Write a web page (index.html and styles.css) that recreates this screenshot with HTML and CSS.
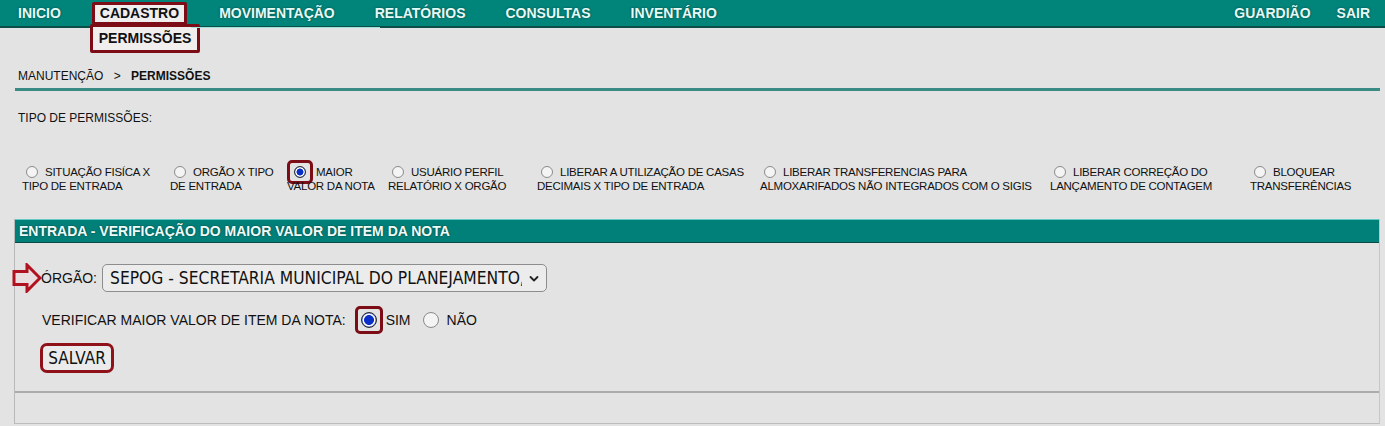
FILE: index.html
```html
<!DOCTYPE html>
<html lang="pt-BR">
<head>
<meta charset="utf-8">
<title>Permissões</title>
<link rel="stylesheet" href="styles.css">
</head>
<body>
<nav class="topbar">
  <ul class="menu">
    <li class="menu-item">INICIO</li>
    <li class="menu-item menu-active">
      <span class="hl-box">CADASTRO</span>
      <div class="dropdown"><span class="hl-box">PERMISSÕES</span></div>
    </li>
    <li class="menu-item menu-hover">MOVIMENTAÇÃO</li>
    <li class="menu-item">RELATÓRIOS</li>
    <li class="menu-item">CONSULTAS</li>
    <li class="menu-item">INVENTÁRIO</li>
  </ul>
  <ul class="menu menu-right">
    <li class="menu-item">GUARDIÃO</li>
    <li class="menu-item">SAIR</li>
  </ul>
</nav>

<main class="page">
  <div class="breadcrumb">MANUTENÇÃO <span class="sep">&gt;</span> <b>PERMISSÕES</b></div>

  <div class="tipo-label">TIPO DE PERMISSÕES:</div>

  <div class="options">
    <label class="opt w1"><input type="radio" name="tipo">SITUAÇÃO FISÍCA X<br>TIPO DE ENTRADA</label>
    <label class="opt w2"><input type="radio" name="tipo">ORGÃO X TIPO<br>DE ENTRADA</label>
    <label class="opt w3"><span class="hl-radio"><input type="radio" name="tipo" checked></span>MAIOR<br>VALOR DA NOTA</label>
    <label class="opt w4"><input type="radio" name="tipo">USUÁRIO PERFIL<br>RELATÓRIO X ORGÃO</label>
    <label class="opt w5"><input type="radio" name="tipo">LIBERAR A UTILIZAÇÃO DE CASAS<br>DECIMAIS X TIPO DE ENTRADA</label>
    <label class="opt w6"><input type="radio" name="tipo">LIBERAR TRANSFERENCIAS PARA<br>ALMOXARIFADOS NÃO INTEGRADOS COM O SIGIS</label>
    <label class="opt w7"><input type="radio" name="tipo">LIBERAR CORREÇÃO DO<br>LANÇAMENTO DE CONTAGEM</label>
    <label class="opt w8"><input type="radio" name="tipo">BLOQUEAR<br>TRANSFERÊNCIAS</label>
  </div>

  <section class="panel">
    <h2 class="panel-title">ENTRADA - VERIFICAÇÃO DO MAIOR VALOR DE ITEM DA NOTA</h2>
    <div class="panel-body">
      <div class="row row-orgao">
        <svg class="arrow" width="30" height="30" viewBox="0 0 30 30" aria-hidden="true">
          <path d="M2 8.5 H15 V2 L28 15 L15 28 V21.5 H2 Z" fill="#e9dfe0" stroke="#b0121f" stroke-width="3" stroke-linejoin="miter"/>
        </svg>
        <span class="lbl">ÓRGÃO:</span>
        <div class="select-wrap">
          <select class="select">
            <option>SEPOG - SECRETARIA MUNICIPAL DO PLANEJAMENTO,</option>
          </select>
          <svg class="chev" width="10" height="8" viewBox="0 0 10 8" aria-hidden="true">
            <path d="M1.5 2 L5 5.5 L8.5 2" fill="none" stroke="#222" stroke-width="1.8" stroke-linecap="round" stroke-linejoin="round"/>
          </svg>
        </div>
      </div>
      <div class="row row-verif">
        <span class="lbl">VERIFICAR MAIOR VALOR DE ITEM DA NOTA:</span>
        <span class="hl-big"><input type="radio" name="verif" checked></span>
        <span class="radio-txt">SIM</span>
        <input class="big-radio" type="radio" name="verif">
        <span class="radio-txt">NÃO</span>
      </div>
      <div class="row row-btn">
        <button class="btn" type="button">SALVAR</button>
      </div>
    </div>
    <div class="panel-foot"></div>
  </section>
</main>
</body>
</html>
```

FILE: styles.css
```css
* { box-sizing: border-box; }

html, body {
  margin: 0;
  padding: 0;
  background: #e3e3e3;
  font-family: "Liberation Sans", Arial, sans-serif;
  color: #111;
  height: 426px;
  overflow: hidden;
}

/* ---------- top bar ---------- */
.topbar {
  display: flex;
  justify-content: space-between;
  align-items: center;
  height: 28px;
  background: #01847a;
  border-bottom: 2px solid #0b4d48;
  padding: 0 15px 0 18px;
}

.menu {
  display: flex;
  gap: 40px;
  list-style: none;
  margin: 0;
  padding: 0;
  align-items: center;
}

.menu-right { gap: 26px; }

.menu-item {
  position: relative;
  font-weight: bold;
  font-size: 14px;
  color: #e4fbf7;
  text-shadow: 0 0 2px #0a3f3a;
  line-height: 20px;
}

.menu-active .hl-box { margin-left: -9px; margin-right: -8px; }

.hl-box {
  display: inline-block;
  background: #f1eeee;
  color: #111;
  text-shadow: none;
  border: 3px solid #7c0c16;
  border-radius: 2px;
  padding: 0 5px;
  line-height: 17px;
}

.dropdown {
  position: absolute;
  left: 0;
  top: 22px;
}

.dropdown .hl-box {
  margin: 0 0 0 -11px;
  padding: 3px 6px 3px 6px;
  line-height: 17px;
}

.menu-hover::after {
  content: "";
  position: absolute;
  left: -28px;
  right: -45px;
  bottom: -5px;
  height: 1px;
  background: #9fe3dc;
}

/* ---------- page ---------- */
.page {
  margin: 0 5px 0 15px;
}

.breadcrumb {
  font-size: 12px;
  line-height: 16px;
  padding: 40px 0 4px 3px;
  border-bottom: 3px solid #3a8b86;
}

.breadcrumb .sep { margin: 0 7px; }

.tipo-label {
  font-size: 12px;
  line-height: 16px;
  margin-top: 19px;
  padding-left: 3px;
}

.options {
  display: flex;
  margin-top: 39px;
  padding-left: 7px;
}

.opt {
  flex: none;
  font-size: 11.5px;
  letter-spacing: -0.25px;
  line-height: 14px;
  white-space: nowrap;
}

.w1 { width: 148px; }
.w2 { width: 117px; }
.w3 { width: 101px; }
.w4 { width: 149px; }
.w5 { width: 223px; }
.w6 { width: 290px; }
.w7 { width: 200px; }
.w8 { width: 120px; }

input[type="radio"] {
  appearance: none;
  -webkit-appearance: none;
  width: 12px;
  height: 12px;
  margin: 0 7px 0 4px;
  border: 1px solid #8a8a8a;
  border-radius: 50%;
  background: #f4f4f4;
  vertical-align: -2px;
}

input[type="radio"]:checked {
  border: 1px solid #2b2b2b;
  background: radial-gradient(circle, #0a2fc8 0 3.2px, #ffffff 3.8px 4.4px, #6b7bd8 5px);
}

/* inline highlight: padding/border don't change the line height */
.hl-radio {
  display: inline;
  border: 3px solid #7c0c16;
  border-radius: 5px;
  padding: 3px 4px 3px 4px;
  margin-right: 3px;
}

.hl-radio input[type="radio"] { margin: 0; }

/* ---------- panel ---------- */
.panel {
  margin-top: 26px;
  margin-left: -1px;
  border-left: 1px solid #b8b8b8;
  border-right: 1px solid #c6c6c6;
}

.panel-title {
  margin: 0;
  height: 24px;
  background: #01807a;
  border-top: 1px solid #62cbc3;
  border-bottom: 1px solid #0b4a45;
  color: #eefcfa;
  text-shadow: 0 0 2px #073a36;
  font-size: 14px;
  font-weight: bold;
  line-height: 22px;
  padding-left: 4px;
}

.panel-body {
  padding: 20px 0 18px 0;
  border-bottom: 2px solid #ababab;
}

.row {
  display: flex;
  align-items: center;
}

.row-orgao { margin-left: -3px; }

.arrow { flex: none; margin-right: -1px; }

.lbl {
  font-size: 14px;
}

.row-orgao .lbl { margin-right: 5px; }

.select-wrap {
  position: relative;
  width: 445px;
  height: 28px;
}

.select {
  appearance: none;
  -webkit-appearance: none;
  width: 100%;
  height: 100%;
  border: 1px solid #8d8d8d;
  border-radius: 5px;
  background: #ececec;
  font-family: "Liberation Sans Narrow", "DejaVu Sans Condensed", "Liberation Sans", sans-serif;
  font-stretch: condensed;
  font-size: 17.3px;
  color: #111;
  padding: 0 24px 0 7px;
}

.chev {
  position: absolute;
  right: 8px;
  top: 11px;
  pointer-events: none;
}

.row-verif {
  margin-top: 13px;
  padding-left: 27px;
}

.row-verif .lbl { margin-right: 9px; }

.hl-big {
  display: flex;
  border: 3px solid #7c0c16;
  border-radius: 5px;
  padding: 3px;
  margin-right: 3px;
}

.hl-big input[type="radio"],
input.big-radio {
  width: 16px;
  height: 16px;
  margin: 0;
}

input.big-radio { margin: 0 8px 0 12px; }

.hl-big input[type="radio"]:checked {
  background: radial-gradient(circle, #0a2fc8 0 4.6px, #ffffff 5.3px 6px, #6b7bd8 6.8px);
}

.radio-txt {
  font-size: 14px;
}

.row-btn {
  margin-top: 9px;
  padding-left: 25px;
}

.btn {
  height: 30px;
  width: 74px;
  border: 3px solid #8f1119;
  border-radius: 7px;
  background: #ebebeb;
  font-family: "Liberation Sans Narrow", "DejaVu Sans Condensed", "Liberation Sans", sans-serif;
  font-stretch: condensed;
  font-size: 17px;
  color: #111;
  padding: 0;
}

.panel-foot {
  height: 31px;
  border-bottom: 1px solid #bdbdbd;
}
```
